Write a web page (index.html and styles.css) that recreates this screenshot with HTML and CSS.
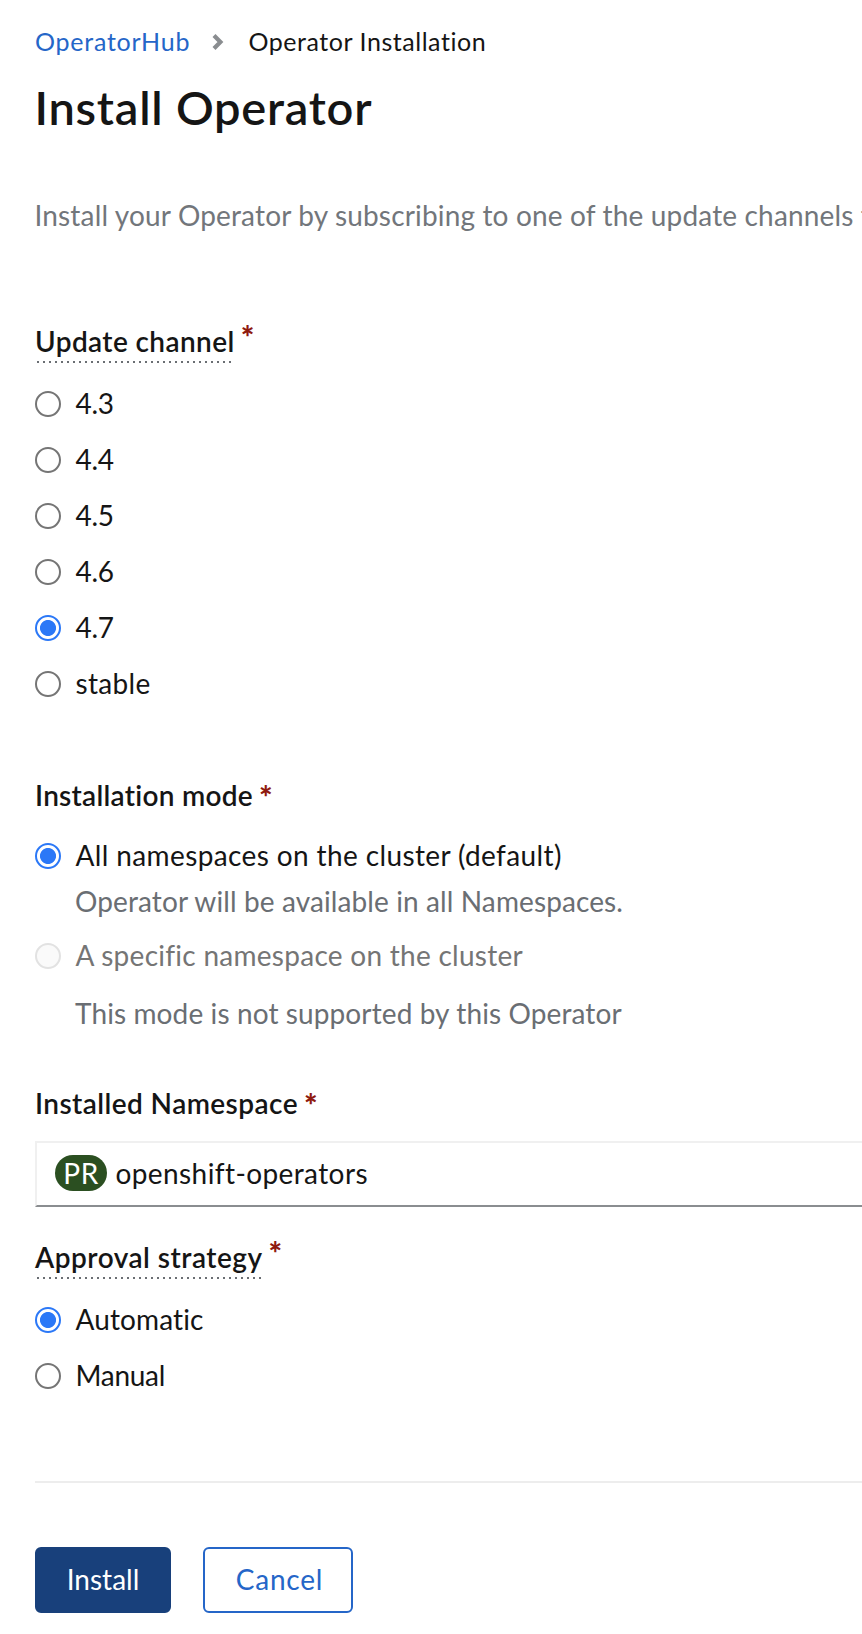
FILE: index.html
```
<!DOCTYPE html>
<html lang="en">
<head>
<meta charset="utf-8">
<title>Install Operator</title>
<link rel="stylesheet" href="styles.css">
</head>
<body>
<main class="page">
  <nav class="breadcrumb">
    <a class="crumb-link" href="#">OperatorHub</a>
    <svg class="crumb-sep" width="12" height="18" viewBox="0 0 12 18"><path d="M2 2.6 8.4 9 2 15.4" fill="none" stroke="#8a8d90" stroke-width="4.2"/></svg>
    <span class="crumb-current">Operator Installation</span>
  </nav>
  <h1 class="title">Install Operator</h1>
  <p class="intro">Install your Operator by subscribing to one of the update channels to</p>

  <section class="group channel">
    <h2 class="label"><span class="hint ls-update">Update channel</span><span class="required raised">*</span></h2>
    <div class="options">
      <label class="option"><input class="radio" type="radio" name="channel"><span class="num">4.3</span></label>
      <label class="option"><input class="radio" type="radio" name="channel"><span class="num">4.4</span></label>
      <label class="option"><input class="radio" type="radio" name="channel"><span class="num">4.5</span></label>
      <label class="option"><input class="radio" type="radio" name="channel"><span class="num">4.6</span></label>
      <label class="option"><input class="radio" type="radio" name="channel" checked><span class="num">4.7</span></label>
      <label class="option"><input class="radio" type="radio" name="channel"><span class="ls-stable">stable</span></label>
    </div>
  </section>

  <section class="group mode">
    <h2 class="label"><span class="ls-mode">Installation mode</span><span class="required">*</span></h2>
    <div class="mode-options">
      <label class="option"><input class="radio" type="radio" name="mode" checked><span class="ls-all">All namespaces on the cluster (default)</span></label>
      <p class="help help-near">Operator will be available in all Namespaces.</p>
      <label class="option disabled"><input class="radio" type="radio" name="mode" disabled><span class="ls-specific">A specific namespace on the cluster</span></label>
      <p class="help help-far">This mode is not supported by this Operator</p>
    </div>
  </section>

  <section class="group namespace">
    <h2 class="label"><span class="ls-installed">Installed Namespace</span><span class="required">*</span></h2>
    <div class="select">
      <span class="badge">PR</span>
      <span class="select-text">openshift-operators</span>
    </div>
  </section>

  <section class="group approval">
    <h2 class="label"><span class="hint ls-approval">Approval strategy</span><span class="required raised">*</span></h2>
    <div class="options">
      <label class="option"><input class="radio" type="radio" name="approval" checked><span class="ls-auto">Automatic</span></label>
      <label class="option"><input class="radio" type="radio" name="approval"><span class="ls-manual">Manual</span></label>
    </div>
  </section>

  <footer class="actions">
    <button class="btn primary">Install</button>
    <button class="btn secondary">Cancel</button>
  </footer>
</main>
</body>
</html>
```
FILE: styles.css
```
* { box-sizing: border-box; }
html { background: #fff; }
body {
  margin: 0;
  color: #151515;
  font: 400 28px/42px Lato, sans-serif;
  font-variant-ligatures: none;
}
h1, h2, p { margin: 0; }

.page {
  height: 1634px;
  padding: 22px 0 0 35px;
  display: flex;
  flex-direction: column;
  overflow: hidden;
}

.breadcrumb {
  display: flex;
  align-items: center;
  height: 38px;
  font-size: 25px;
  line-height: 38px;
}
.crumb-link {
  width: 177px;
  color: #2566c8;
  text-decoration: none;
  letter-spacing: 0.75px;
}
.crumb-sep { margin-top: 2px; }
.crumb-current { margin-left: 24.5px; letter-spacing: 0.54px; }

.title {
  margin: 16px 0 0 -0.5px;
  font-size: 47px;
  font-weight: 600;
  line-height: 62px;
  letter-spacing: 0.75px;
}
.intro {
  margin: 56px 0 0 -0.5px;
  color: #72767b;
  letter-spacing: 0.16px;
  white-space: nowrap;
  overflow: hidden;
}

.label {
  display: flex;
  font-size: 28px;
  font-weight: 600;
  line-height: 44px;
  height: 44px;
}
.hint {
  height: 44px;
  background: repeating-linear-gradient(90deg, #6a6e73 0 2px, transparent 2px 6px) 2px 100% / calc(100% - 4px) 2px no-repeat;
}
.required {
  margin-left: 6px;
  color: #8f1a10;
  font-size: 32px;
  font-weight: 900;
  line-height: 48px;
}
.raised { margin-top: -6px; }

.channel { margin-top: 83px; }
.options {
  display: flex;
  flex-direction: column;
  gap: 14px;
  margin-top: 18px;
}
.option {
  display: flex;
  align-items: flex-start;
  gap: 14.5px;
  height: 42px;
  line-height: 44px;
}
.radio {
  appearance: none;
  flex: none;
  width: 26px;
  height: 26px;
  margin: 10px 0 0;
  border: 2px solid #757575;
  border-radius: 50%;
  background: #fff;
}
.radio:checked {
  border-color: #2b78f7;
  background: radial-gradient(circle, #2b78f7 7.6px, #fff 8.4px);
}
.radio:disabled { border-color: #e2e2e2; background: #fafafa; }

.mode { margin-top: 70px; }
.mode-options { margin-top: 16px; }
.help {
  height: 42px;
  margin-left: 40px;
  color: #6a6e73;
  line-height: 44px;
  letter-spacing: 0.11px;
}
.help-near { margin-top: 4px; margin-bottom: 12px; }
.help-far { margin-top: 16px; }
.disabled { color: #757575; }

.namespace { margin-top: 48px; }
.select {
  display: flex;
  height: 66px;
  margin-top: 16px;
  padding: 12px 0 0 18px;
  border: 2px solid #f0f0f0;
  border-right: 0;
  border-bottom-color: #8a8d90;
}
.badge {
  width: 52px;
  height: 36px;
  border-radius: 18px;
  background: #2b4f21;
  color: #fff;
  line-height: 36px;
  text-align: center;
  letter-spacing: 0.5px;
}
.select-text { margin-left: 8.5px; line-height: 36px; letter-spacing: 0.4px; }

.approval { margin-top: 28px; }

.actions {
  display: flex;
  gap: 32px;
  margin-top: 86px;
  padding-top: 64px;
  border-top: 2px solid #ededed;
}
.btn {
  height: 66px;
  padding: 0 0 2px;
  border: 2px solid #2566c8;
  border-radius: 6px;
  font: inherit;
  line-height: 60px;
}
.primary { width: 136px; border-color: #18407b; background: #18407b; color: #fff; }
.secondary { width: 150px; padding-left: 3px; background: #fff; color: #2566c8; letter-spacing: 0.77px; }

.num { letter-spacing: -0.3px; }
.ls-update { letter-spacing: 0.4px; }
.ls-stable { letter-spacing: 0.33px; }
.ls-mode { letter-spacing: 0.27px; }
.ls-all { letter-spacing: 0.38px; }
.ls-specific { letter-spacing: 0.27px; }
.ls-installed { letter-spacing: 0.43px; }
.ls-approval { letter-spacing: 0.5px; }
.ls-auto { letter-spacing: 0.12px; }
.ls-manual { letter-spacing: -0.3px; }
```
